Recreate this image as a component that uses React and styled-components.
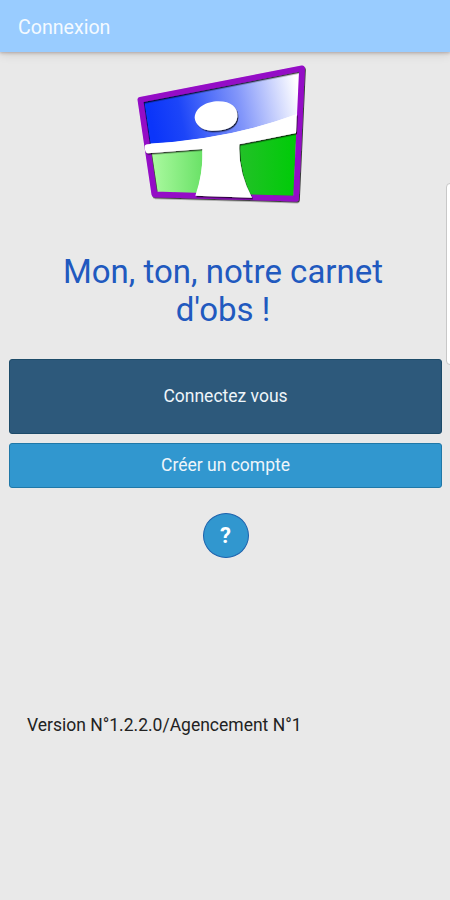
import React from 'react';
import styled, { createGlobalStyle } from 'styled-components';

const GlobalStyle = createGlobalStyle`
    body {
        margin: 0;
        background: #e9e9e9;
        font-family: Roboto, sans-serif;
    }
`;

const Screen = styled.div`
    position: relative;
    display: flex;
    flex-direction: column;
    height: 900px;
    background: #e9e9e9;
    overflow: hidden;
`;

const Header = styled.header`
    display: flex;
    flex-shrink: 0;
    align-items: center;
    height: 52px;
    padding: 2px 18px 0;
    box-sizing: border-box;
    background: #99ccff;
    box-shadow: 0 1px 3px rgba(90, 60, 50, 0.32), 0 2px 10px rgba(0, 0, 0, 0.12);
`;

const HeaderTitle = styled.span`
    color: #f4faff;
    font-size: 19.6px;
`;

const Content = styled.main`
    display: flex;
    flex-direction: column;
    align-items: center;
    padding: 3px 8px 0 9px;
`;

const Logo = styled.svg`
    display: block;
    width: 185px;
    height: 155px;
    margin-right: 6px;
`;

const Title = styled.h1`
    width: 340px;
    margin: 43px 5px 0 0;
    color: #2159bf;
    font-size: 33px;
    font-weight: 400;
    line-height: 37.5px;
    text-align: center;
`;

const Buttons = styled.div`
    display: flex;
    flex-direction: column;
    gap: 9px;
    width: 100%;
    margin-top: 31px;
`;

const Button = styled.button`
    height: ${(props) => (props.$primary ? '75px' : '45px')};
    padding: 0 0 2px;
    border: 1px solid ${(props) => (props.$primary ? '#1d4b69' : '#1f78a8')};
    border-radius: 3px;
    background: ${(props) => (props.$primary ? '#2d597b' : '#3197cf')};
    color: #eef5fa;
    font-family: inherit;
    font-size: 17.5px;
`;

const HelpButton = styled.button`
    width: 46px;
    height: 45px;
    margin-top: 25px;
    padding: 0;
    border: 1px solid #1d62ad;
    border-radius: 50%;
    background: #3197cf;
    color: #fff;
    font-family: inherit;
    font-size: 22px;
    font-weight: 700;
`;

const Version = styled.p`
    align-self: flex-start;
    margin: 157px 0 0 18px;
    color: #222;
    font-size: 17.5px;
    line-height: 20px;
`;

const EdgeHandle = styled.div`
    position: absolute;
    top: 183px;
    right: -10px;
    width: 14px;
    height: 182px;
    box-sizing: border-box;
    border: 1px solid #c8c8c8;
    border-radius: 4px;
    background: #fff;
`;

const AppLogo = () => (
    <Logo viewBox="0 0 555 465">
        <defs>
            <linearGradient id="sky" x1="60" y1="180" x2="500" y2="90" gradientUnits="userSpaceOnUse">
                <stop offset="0" stopColor="#0b35fa" />
                <stop offset="0.2" stopColor="#1c45f8" />
                <stop offset="0.6" stopColor="#8296fa" />
                <stop offset="1" stopColor="#fff" />
            </linearGradient>
            <linearGradient id="meadow" x1="70" y1="0" x2="215" y2="0" gradientUnits="userSpaceOnUse">
                <stop offset="0" stopColor="#a9f99e" />
                <stop offset="1" stopColor="#6be268" />
            </linearGradient>
            <linearGradient id="grass" x1="330" y1="0" x2="495" y2="0" gradientUnits="userSpaceOnUse">
                <stop offset="0" stopColor="#22c127" />
                <stop offset="1" stopColor="#00cb08" />
            </linearGradient>
            <filter id="shadow" x="-10%" y="-10%" width="125%" height="125%">
                <feDropShadow dx="3" dy="4" stdDeviation="2" floodColor="#000" floodOpacity="0.75" />
            </filter>
        </defs>
        <path d="M31 134 L516 40 L498 431 L73 418 Z" fill="#fff" />
        <path d="M38 140 L508 50 L500 178 Q300 252 52 266 Z" fill="url(#sky)" />
        <path d="M64 296 L217 283 Q220 350 200 416 L79 410 Z" fill="url(#meadow)" />
        <path d="M328 270 L499 235 L491 424 L362 424 Q325 350 328 270 Z" fill="url(#grass)" />
        <path
            d="M31 134 L516 40 L498 431 L73 418 Z"
            fill="none"
            stroke="#9408c6"
            strokeWidth="17"
            strokeLinejoin="round"
            filter="url(#shadow)"
        />
        <g fill="#fff" filter="url(#shadow)">
            <path d="M44 276 Q44 268 52 268 Q300 252 500 178 L498 234 L328 268 Q324 350 366 428 L196 422 Q221 350 217 282 L54 295 Q45 295 44 276 Z" />
            <path d="M194 188 C196 158 229 139 265 139 C304 139 324 157 322 185 C320 215 287 228 244 227 C215 226 195 207 194 188 Z" />
        </g>
    </Logo>
);

const App = () => {
    return (
        <>
            <GlobalStyle />
            <Screen>
                <Header>
                    <HeaderTitle>Connexion</HeaderTitle>
                </Header>
                <Content>
                    <AppLogo />
                    <Title>Mon, ton, notre carnet d'obs !</Title>
                    <Buttons>
                        <Button $primary>Connectez vous</Button>
                        <Button>Créer un compte</Button>
                    </Buttons>
                    <HelpButton>?</HelpButton>
                    <Version>Version N°1.2.2.0/Agencement N°1</Version>
                </Content>
                <EdgeHandle />
            </Screen>
        </>
    );
};

export default App;
